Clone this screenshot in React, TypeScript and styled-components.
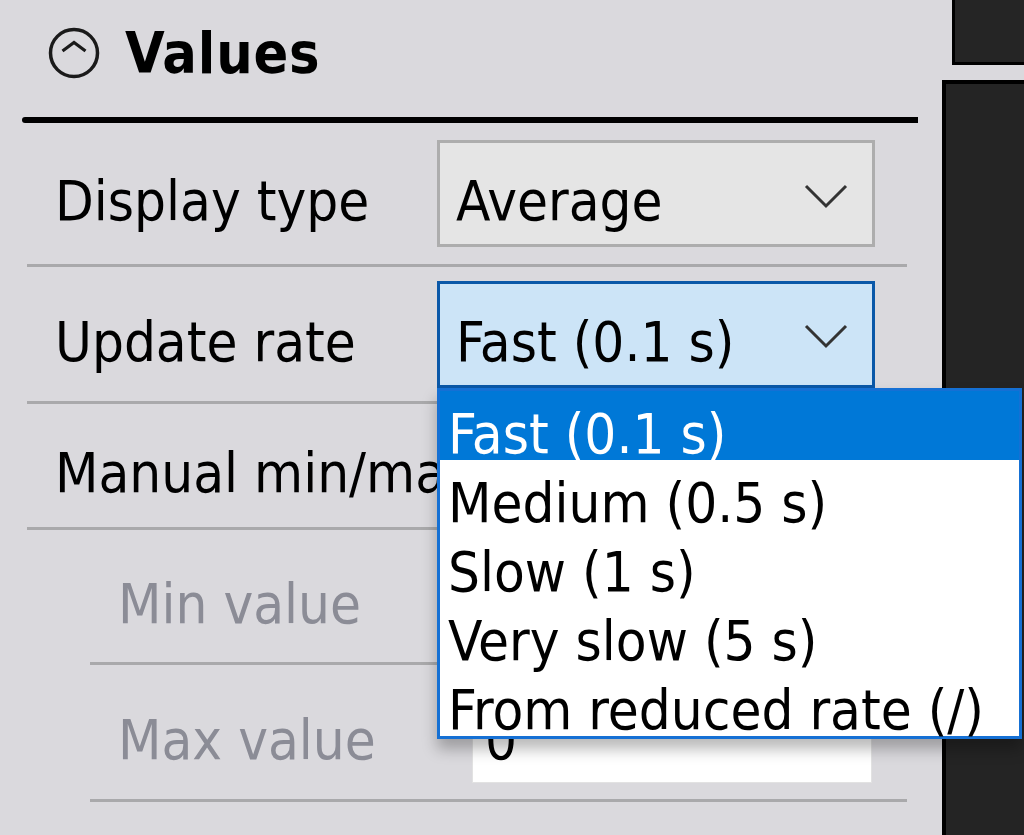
import styled, { createGlobalStyle } from "styled-components";

const GlobalStyle = createGlobalStyle`
    html, body {
        margin: 0;
        padding: 0;
        background: #dad9dd;
        overflow: hidden;
    }

    body {
        font-family: "DejaVu Sans Condensed", "DejaVu Sans", sans-serif;
        font-stretch: condensed;
        font-size: 56px;
        color: #000;
    }
`;

const Screen = styled.div`
    display: flex;
    width: 1024px;
    height: 835px;
    overflow: hidden;
`;

const PropertyPanel = styled.div`
    width: 940px;
    flex-shrink: 0;
    padding: 0 22px;
    box-sizing: border-box;
`;

const SectionHeader = styled.div`
    display: flex;
    align-items: center;
    gap: 25px;
    height: 117px;
    padding-left: 26px;
    padding-bottom: 12px;
    box-sizing: border-box;
`;

const SectionTitle = styled.span`
    font-weight: bold;
    font-size: 57px;
    letter-spacing: 0.8px;
`;

const SectionRule = styled.div`
    height: 6px;
    background: #000;
    border-radius: 3px 0 0 3px;
`;

const Row = styled.div<{ $indent?: boolean; $height: number }>`
    display: flex;
    align-items: center;
    height: ${p => p.$height}px;
    margin-left: ${p => (p.$indent ? 68 : 5)}px;
    margin-right: 11px;
    border-bottom: 3px solid #a9a9ab;
`;

// text sits a little lower in the row than the font box centre
const Text = styled.span`
    display: block;
    padding-top: 14px;
    white-space: nowrap;
`;

const Label = styled.div<{ $width: number; $disabled?: boolean }>`
    width: ${p => p.$width}px;
    flex-shrink: 0;
    padding-left: 28px;
    box-sizing: border-box;
    white-space: nowrap;
    color: ${p => (p.$disabled ? "#8b8c96" : "#000")};
`;

const ComboWrap = styled.div`
    position: relative;
`;

const Combo = styled.div<{ $focused?: boolean }>`
    display: flex;
    align-items: center;
    justify-content: space-between;
    width: 438px;
    height: 107px;
    flex-shrink: 0;
    box-sizing: border-box;
    padding: 0 24px 0 16px;
    background: ${p => (p.$focused ? "#cce4f7" : "#e5e5e5")};
    border: 3px solid ${p => (p.$focused ? "#0a58a8" : "#adadad")};
    white-space: nowrap;
`;

const Chevron = () => (
    <svg width="44" height="26" viewBox="0 0 44 26" style={{ marginTop: 4 }}>
        <path d="M2 3 L22 23 L42 3" fill="none" stroke="#333" strokeWidth="3" />
    </svg>
);

const DropList = styled.div`
    position: absolute;
    top: 100%;
    left: 0;
    width: 585px;
    box-sizing: border-box;
    border: 3px solid #1570d4;
    background: #fff;
    box-shadow: 0 10px 14px rgba(0, 0, 0, 0.28);
    z-index: 10;
`;

const DropItem = styled.div<{ $selected?: boolean }>`
    display: flex;
    align-items: center;
    height: 69px;
    padding: 16px 0 0 8px;
    box-sizing: border-box;
    white-space: nowrap;
    background: ${p => (p.$selected ? "#0078d7" : "#fff")};
    color: ${p => (p.$selected ? "#fff" : "#000")};
`;

const CheckBox = styled.div`
    width: 40px;
    height: 40px;
    box-sizing: border-box;
    border: 3px solid #333;
    background: #fff;
`;

const ValueInput = styled.div`
    width: 400px;
    height: 102px;
    flex-shrink: 0;
    box-sizing: border-box;
    padding-left: 12px;
    display: flex;
    align-items: center;
    background: #fff;
    border: 1px solid #e2e2e2;
    color: #000;
`;

const SideColumn = styled.div`
    flex: 1;
    display: flex;
    flex-direction: column;
    gap: 15px;
`;

const SideTop = styled.div`
    height: 65px;
    margin-left: 12px;
    box-sizing: border-box;
    background: #252525;
    border-left: 3px solid #000;
    border-bottom: 3px solid #000;
`;

const SideMain = styled.div`
    flex: 1;
    margin-left: 2px;
    background: #242424;
    border-left: 4px solid #000;
    border-top: 4px solid #000;
`;

const CollapseIcon = () => (
    <svg width="52" height="52" viewBox="0 0 52 52">
        <circle cx="26" cy="26" r="23.5" fill="none" stroke="#1a1a1a" strokeWidth="3.5" />
        <path d="M14.5 24 L26 15.5 L37.5 24" fill="none" stroke="#1a1a1a" strokeWidth="3.2" />
    </svg>
);

const rateOptions = [
    "Fast (0.1 s)",
    "Medium (0.5 s)",
    "Slow (1 s)",
    "Very slow (5 s)",
    "From reduced rate (/)",
];

export default function App() {
    return (
        <Screen>
            <GlobalStyle />
            <PropertyPanel>
                <SectionHeader>
                    <CollapseIcon />
                    <SectionTitle>Values</SectionTitle>
                </SectionHeader>
                <SectionRule />

                <Row $height={141}>
                    <Label $width={410}><Text>Display type</Text></Label>
                    <Combo>
                        <Text>Average</Text>
                        <Chevron />
                    </Combo>
                </Row>

                <Row $height={134}>
                    <Label $width={410}><Text>Update rate</Text></Label>
                    <ComboWrap>
                        <Combo $focused>
                            <Text>Fast (0.1 s)</Text>
                            <Chevron />
                        </Combo>
                        <DropList>
                            {rateOptions.map((o, i) => (
                                <DropItem key={o} $selected={i === 0}>{o}</DropItem>
                            ))}
                        </DropList>
                    </ComboWrap>
                </Row>

                <Row $height={123}>
                    <Label $width={410}><Text>Manual min/max</Text></Label>
                    <CheckBox />
                </Row>

                <Row $indent $height={132}>
                    <Label $width={382} $disabled><Text>Min value</Text></Label>
                    <ValueInput><Text>0</Text></ValueInput>
                </Row>

                <Row $indent $height={134}>
                    <Label $width={382} $disabled><Text>Max value</Text></Label>
                    <ValueInput><Text>0</Text></ValueInput>
                </Row>
            </PropertyPanel>
            <SideColumn>
                <SideTop />
                <SideMain />
            </SideColumn>
        </Screen>
    );
}
